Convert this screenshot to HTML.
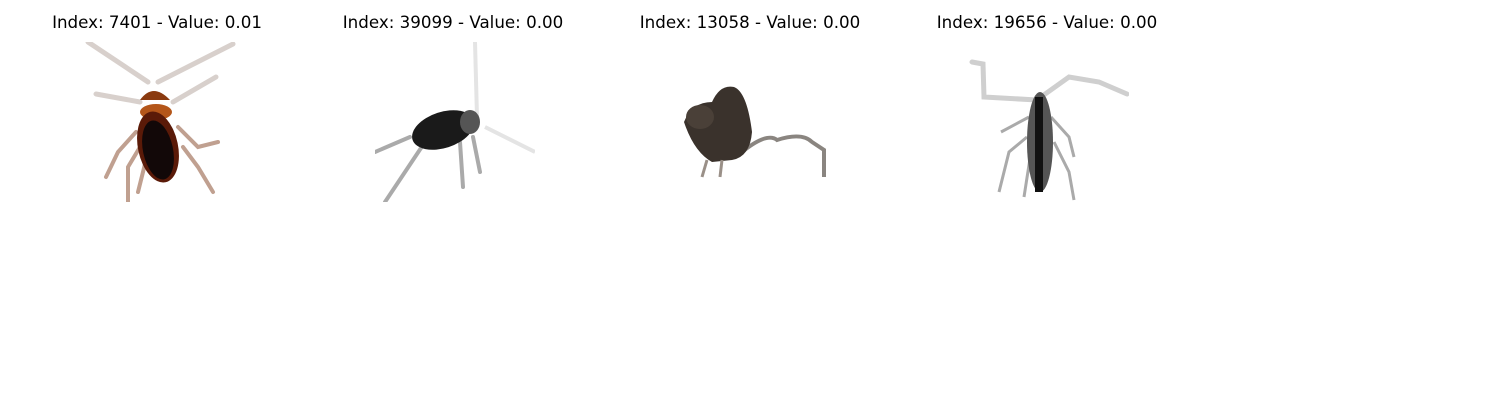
<!DOCTYPE html>
<html><head><style>
body{margin:0;width:1500px;height:400px;background:#fff;position:relative;overflow:hidden;font-family:"DejaVu Sans","Liberation Sans",sans-serif}
.t{position:absolute;top:12px;font-size:16.7px;color:#000;white-space:nowrap;transform:translateX(-50%)}
svg{position:absolute;top:42px}
</style></head><body>
<div class="t" style="left:157px">Index: 7401 - Value: 0.01</div>
<div class="t" style="left:453px">Index: 39099 - Value: 0.00</div>
<div class="t" style="left:750px">Index: 13058 - Value: 0.00</div>
<div class="t" style="left:1047px">Index: 19656 - Value: 0.00</div>

<svg style="left:78px" width="160" height="160" viewBox="0 0 160 160">
<g stroke="#d8d0cc" stroke-width="5" fill="none" stroke-linecap="round">
<path d="M70 40 L10 0"/><path d="M80 40 L155 2"/>
<path d="M62 60 L18 52"/><path d="M95 60 L138 35"/>
</g>
<g stroke="#c0a090" stroke-width="4" fill="none" stroke-linecap="round">
<path d="M58 90 L40 110 L28 135"/><path d="M62 105 L50 125 L50 160"/>
<path d="M100 85 L120 105 L140 100"/><path d="M105 105 L120 125 L135 150"/>
<path d="M70 110 L60 150"/>
</g>
<path d="M62 58 Q75 40 92 58 Z" fill="#8a3a10"/>
<ellipse cx="78" cy="70" rx="16" ry="8" fill="#b4561a"/>
<ellipse cx="80" cy="105" rx="20" ry="36" fill="#5a1a08" transform="rotate(-12 80 105)"/>
<ellipse cx="80" cy="108" rx="15" ry="30" fill="#120808" transform="rotate(-12 80 108)"/>
</svg>

<svg style="left:375px" width="160" height="160" viewBox="0 0 160 160">
<g stroke="#e4e4e4" stroke-width="4" fill="none"><path d="M100 0 L102 75"/><path d="M110 85 L160 110"/></g>
<g stroke="#aaa" stroke-width="4" fill="none" stroke-linecap="round">
<path d="M35 95 L0 110"/><path d="M50 100 L10 160"/><path d="M85 100 L88 145"/><path d="M98 95 L105 130"/>
</g>
<ellipse cx="68" cy="88" rx="32" ry="18" fill="#1a1a1a" transform="rotate(-18 68 88)"/>
<ellipse cx="95" cy="80" rx="10" ry="12" fill="#555"/>
</svg>

<svg style="left:672px" width="160" height="160" viewBox="0 0 160 160">
<path d="M70 110 Q95 90 105 98 Q130 90 140 100 L152 108 L152 135" stroke="#8a8580" stroke-width="4" fill="none"/>
<path d="M12 80 Q20 60 40 60 Q48 42 62 45 Q75 50 80 90 Q78 115 60 118 L40 120 Q22 110 12 80Z" fill="#3a322c"/>
<ellipse cx="28" cy="75" rx="14" ry="12" fill="#4a4038"/>
<g stroke="#9a9088" stroke-width="3"><path d="M35 118 L30 135"/><path d="M50 118 L48 135"/></g>
</svg>

<svg style="left:969px" width="160" height="160" viewBox="0 0 160 160">
<g stroke="#cfcfcf" stroke-width="5" fill="none" stroke-linecap="round">
<path d="M3 20 L14 22 L15 55 L68 58"/><path d="M72 55 L100 35 L130 40 L158 52"/>
</g>
<g stroke="#aaa" stroke-width="3" fill="none">
<path d="M60 75 L32 90"/><path d="M58 95 L40 110 L30 150"/><path d="M62 110 L55 155"/>
<path d="M82 75 L100 95 L105 115"/><path d="M85 100 L100 130 L105 158"/>
</g>
<ellipse cx="71" cy="100" rx="13" ry="50" fill="#555"/>
<rect x="66" y="55" width="8" height="95" fill="#111"/>
</svg>
</body></html>
